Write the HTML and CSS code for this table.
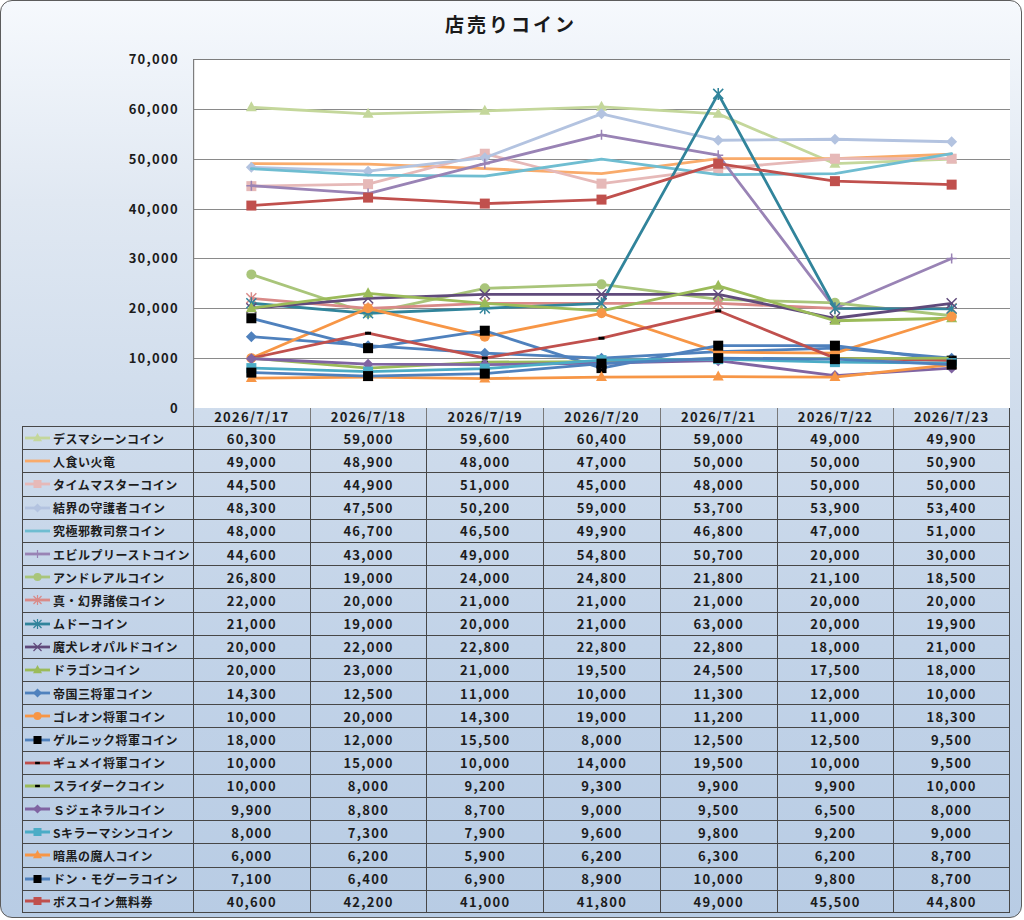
FILE: index.html
```html
<!DOCTYPE html>
<html lang="ja">
<head>
<meta charset="utf-8">
<title>店売りコイン</title>
<link rel="stylesheet" href="styles.css">
</head>
<body>
<div class="frame">
  <h1 class="title">店売りコイン</h1>
  <div class="chart">
    <div class="yaxis">
      <span>70,000</span><span>60,000</span><span>50,000</span><span>40,000</span><span>30,000</span><span>20,000</span><span>10,000</span><span>0</span>
    </div>
    <svg class="plot" id="plot" width="817" height="349" viewBox="0 0 817 349"></svg>
  </div>
  <div class="table">
    <div class="corner"></div>
    <div class="date">2026/7/17</div><div class="date">2026/7/18</div><div class="date">2026/7/19</div><div class="date">2026/7/20</div><div class="date">2026/7/21</div><div class="date">2026/7/22</div><div class="date">2026/7/23</div>

    <div class="name"><svg class="key" data-s="0" width="27" height="12"></svg>デスマシーンコイン</div><div class="num">60,300</div><div class="num">59,000</div><div class="num">59,600</div><div class="num">60,400</div><div class="num">59,000</div><div class="num">49,000</div><div class="num">49,900</div>
    <div class="name"><svg class="key" data-s="1" width="27" height="12"></svg>人食い火竜</div><div class="num">49,000</div><div class="num">48,900</div><div class="num">48,000</div><div class="num">47,000</div><div class="num">50,000</div><div class="num">50,000</div><div class="num">50,900</div>
    <div class="name"><svg class="key" data-s="2" width="27" height="12"></svg>タイムマスターコイン</div><div class="num">44,500</div><div class="num">44,900</div><div class="num">51,000</div><div class="num">45,000</div><div class="num">48,000</div><div class="num">50,000</div><div class="num">50,000</div>
    <div class="name"><svg class="key" data-s="3" width="27" height="12"></svg>結界の守護者コイン</div><div class="num">48,300</div><div class="num">47,500</div><div class="num">50,200</div><div class="num">59,000</div><div class="num">53,700</div><div class="num">53,900</div><div class="num">53,400</div>
    <div class="name"><svg class="key" data-s="4" width="27" height="12"></svg>究極邪教司祭コイン</div><div class="num">48,000</div><div class="num">46,700</div><div class="num">46,500</div><div class="num">49,900</div><div class="num">46,800</div><div class="num">47,000</div><div class="num">51,000</div>
    <div class="name"><svg class="key" data-s="5" width="27" height="12"></svg>エビルプリーストコイン</div><div class="num">44,600</div><div class="num">43,000</div><div class="num">49,000</div><div class="num">54,800</div><div class="num">50,700</div><div class="num">20,000</div><div class="num">30,000</div>
    <div class="name"><svg class="key" data-s="6" width="27" height="12"></svg>アンドレアルコイン</div><div class="num">26,800</div><div class="num">19,000</div><div class="num">24,000</div><div class="num">24,800</div><div class="num">21,800</div><div class="num">21,100</div><div class="num">18,500</div>
    <div class="name"><svg class="key" data-s="7" width="27" height="12"></svg>真・幻界諸侯コイン</div><div class="num">22,000</div><div class="num">20,000</div><div class="num">21,000</div><div class="num">21,000</div><div class="num">21,000</div><div class="num">20,000</div><div class="num">20,000</div>
    <div class="name"><svg class="key" data-s="8" width="27" height="12"></svg>ムドーコイン</div><div class="num">21,000</div><div class="num">19,000</div><div class="num">20,000</div><div class="num">21,000</div><div class="num">63,000</div><div class="num">20,000</div><div class="num">19,900</div>
    <div class="name"><svg class="key" data-s="9" width="27" height="12"></svg>魔犬レオパルドコイン</div><div class="num">20,000</div><div class="num">22,000</div><div class="num">22,800</div><div class="num">22,800</div><div class="num">22,800</div><div class="num">18,000</div><div class="num">21,000</div>
    <div class="name"><svg class="key" data-s="10" width="27" height="12"></svg>ドラゴンコイン</div><div class="num">20,000</div><div class="num">23,000</div><div class="num">21,000</div><div class="num">19,500</div><div class="num">24,500</div><div class="num">17,500</div><div class="num">18,000</div>
    <div class="name"><svg class="key" data-s="11" width="27" height="12"></svg>帝国三将軍コイン</div><div class="num">14,300</div><div class="num">12,500</div><div class="num">11,000</div><div class="num">10,000</div><div class="num">11,300</div><div class="num">12,000</div><div class="num">10,000</div>
    <div class="name"><svg class="key" data-s="12" width="27" height="12"></svg>ゴレオン将軍コイン</div><div class="num">10,000</div><div class="num">20,000</div><div class="num">14,300</div><div class="num">19,000</div><div class="num">11,200</div><div class="num">11,000</div><div class="num">18,300</div>
    <div class="name"><svg class="key" data-s="13" width="27" height="12"></svg>ゲルニック将軍コイン</div><div class="num">18,000</div><div class="num">12,000</div><div class="num">15,500</div><div class="num">8,000</div><div class="num">12,500</div><div class="num">12,500</div><div class="num">9,500</div>
    <div class="name"><svg class="key" data-s="14" width="27" height="12"></svg>ギュメイ将軍コイン</div><div class="num">10,000</div><div class="num">15,000</div><div class="num">10,000</div><div class="num">14,000</div><div class="num">19,500</div><div class="num">10,000</div><div class="num">9,500</div>
    <div class="name"><svg class="key" data-s="15" width="27" height="12"></svg>スライダークコイン</div><div class="num">10,000</div><div class="num">8,000</div><div class="num">9,200</div><div class="num">9,300</div><div class="num">9,900</div><div class="num">9,900</div><div class="num">10,000</div>
    <div class="name"><svg class="key" data-s="16" width="27" height="12"></svg>Ｓジェネラルコイン</div><div class="num">9,900</div><div class="num">8,800</div><div class="num">8,700</div><div class="num">9,000</div><div class="num">9,500</div><div class="num">6,500</div><div class="num">8,000</div>
    <div class="name"><svg class="key" data-s="17" width="27" height="12"></svg>Sキラーマシンコイン</div><div class="num">8,000</div><div class="num">7,300</div><div class="num">7,900</div><div class="num">9,600</div><div class="num">9,800</div><div class="num">9,200</div><div class="num">9,000</div>
    <div class="name"><svg class="key" data-s="18" width="27" height="12"></svg>暗黒の魔人コイン</div><div class="num">6,000</div><div class="num">6,200</div><div class="num">5,900</div><div class="num">6,200</div><div class="num">6,300</div><div class="num">6,200</div><div class="num">8,700</div>
    <div class="name"><svg class="key" data-s="19" width="27" height="12"></svg>ドン・モグーラコイン</div><div class="num">7,100</div><div class="num">6,400</div><div class="num">6,900</div><div class="num">8,900</div><div class="num">10,000</div><div class="num">9,800</div><div class="num">8,700</div>
    <div class="name"><svg class="key" data-s="20" width="27" height="12"></svg>ボスコイン無料券</div><div class="num">40,600</div><div class="num">42,200</div><div class="num">41,000</div><div class="num">41,800</div><div class="num">49,000</div><div class="num">45,500</div><div class="num">44,800</div>
  </div>
</div>
<script src="script.js"></script>
</body>
</html>
```

FILE: styles.css
```css
html, body {
  margin: 0;
  padding: 0;
  background: #ffffff;
}

body {
  font-family: "Noto Sans CJK JP", "Noto Sans", sans-serif;
  color: #1c1c1c;
}

.frame {
  box-sizing: border-box;
  width: 1022px;
  height: 918px;
  border: 1px solid #5c5c5c;
  border-radius: 12px;
  background: linear-gradient(180deg, #f6f9fd 0%, #e0e8f2 22%, #cfdcec 45%, #c2d3e8 70%, #b8cce4 100%);
  display: flex;
  flex-direction: column;
  overflow: hidden;
}

.title {
  margin: 0;
  height: 58px;
  box-sizing: border-box;
  padding-top: 11px;
  font-size: 19px;
  line-height: 24px;
  font-weight: 700;
  letter-spacing: 3px;
  text-align: center;
  color: #1a1a1a;
}

.chart {
  display: flex;
  height: 349px;
}

.yaxis {
  width: 192px;
  height: 365px;
  margin-top: -8px;
  margin-bottom: -8px;
  box-sizing: border-box;
  padding-right: 14px;
  display: flex;
  flex-direction: column;
  justify-content: space-between;
  align-items: flex-end;
  font-size: 13px;
  line-height: 16px;
  font-weight: 700;
  letter-spacing: 1.3px;
}

.plot {
  display: block;
  background: #ffffff;
  flex: none;
}

.table {
  margin-left: 21px;
  width: 988px;
  display: grid;
  grid-template-columns: 171px repeat(7, 1fr);
  grid-template-rows: 18px repeat(21, 23.19px);
}

.table > div {
  box-sizing: border-box;
  border-left: 1px solid #474747;
  border-top: 1px solid #474747;
}

.table > .corner {
  border: none;
}

.table > .date {
  border-top: none;
  border-left-color: #7a7a7a;
  font-size: 13px;
  line-height: 17px;
  font-weight: 700;
  letter-spacing: 1.3px;
  text-align: center;
}

.table > :nth-child(8n) {
  border-right: 1px solid #474747;
}

.table > :nth-last-child(-n+8) {
  border-bottom: 1px solid #474747;
}

.name {
  display: flex;
  align-items: center;
  padding-left: 1px;
  font-size: 12px;
  font-weight: 700;
  letter-spacing: 0.5px;
  white-space: nowrap;
}

.key {
  display: block;
  flex: none;
  margin-right: 2px;
}

.num {
  display: flex;
  align-items: center;
  justify-content: center;
  font-size: 13px;
  font-weight: 700;
  letter-spacing: 1.3px;
}
```

FILE: script.js
```js
(function () {
  var W = 817, H = 349;
  var S = [
    { c: '#C4D79B', m: 'tri', v: [60300, 59000, 59600, 60400, 59000, 49000, 49900] },
    { c: '#F9AB6B', m: 'none', v: [49000, 48900, 48000, 47000, 50000, 50000, 50900] },
    { c: '#E6B9B8', m: 'sq', v: [44500, 44900, 51000, 45000, 48000, 50000, 50000] },
    { c: '#B3C3E0', m: 'dia', v: [48300, 47500, 50200, 59000, 53700, 53900, 53400] },
    { c: '#6FBDD1', m: 'none', v: [48000, 46700, 46500, 49900, 46800, 47000, 51000] },
    { c: '#9983B5', m: 'plus', v: [44600, 43000, 49000, 54800, 50700, 20000, 30000] },
    { c: '#A9C57A', m: 'cir', v: [26800, 19000, 24000, 24800, 21800, 21100, 18500] },
    { c: '#D98A88', m: 'star', v: [22000, 20000, 21000, 21000, 21000, 20000, 20000] },
    { c: '#31849B', m: 'star', v: [21000, 19000, 20000, 21000, 63000, 20000, 19900] },
    { c: '#604A7B', m: 'x', v: [20000, 22000, 22800, 22800, 22800, 18000, 21000] },
    { c: '#9BBB59', m: 'tri', v: [20000, 23000, 21000, 19500, 24500, 17500, 18000] },
    { c: '#4F81BD', m: 'dia', v: [14300, 12500, 11000, 10000, 11300, 12000, 10000] },
    { c: '#F79646', m: 'cir', v: [10000, 20000, 14300, 19000, 11200, 11000, 18300] },
    { c: '#4F81BD', m: 'bsq', v: [18000, 12000, 15500, 8000, 12500, 12500, 9500] },
    { c: '#C0504D', m: 'dash', v: [10000, 15000, 10000, 14000, 19500, 10000, 9500] },
    { c: '#9BBB59', m: 'dash', v: [10000, 8000, 9200, 9300, 9900, 9900, 10000] },
    { c: '#8064A2', m: 'dia', v: [9900, 8800, 8700, 9000, 9500, 6500, 8000] },
    { c: '#4BACC6', m: 'sq', v: [8000, 7300, 7900, 9600, 9800, 9200, 9000] },
    { c: '#F79646', m: 'tri', v: [6000, 6200, 5900, 6200, 6300, 6200, 8700] },
    { c: '#4F81BD', m: 'bsq', v: [7100, 6400, 6900, 8900, 10000, 9800, 8700] },
    { c: '#C0504D', m: 'sq', v: [40600, 42200, 41000, 41800, 49000, 45500, 44800] }
  ];

  function xs(i) { return 58.36 + i * (W / 7); }
  function ys(v) { return H - v * H / 70000; }
  function f(n) { return n.toFixed(2); }

  function marker(type, x, y, s, col, sw) {
    var h = s / 2;
    switch (type) {
      case 'tri':
        return '<polygon points="' + f(x) + ',' + f(y - h - 1) + ' ' + f(x - h - 0.5) + ',' + f(y + h * 0.8) + ' ' + f(x + h + 0.5) + ',' + f(y + h * 0.8) + '" fill="' + col + '"/>';
      case 'sq':
        return '<rect x="' + f(x - h) + '" y="' + f(y - h) + '" width="' + s + '" height="' + s + '" fill="' + col + '"/>';
      case 'bsq':
        return '<rect x="' + f(x - h) + '" y="' + f(y - h) + '" width="' + s + '" height="' + s + '" fill="#000"/>';
      case 'dia':
        return '<polygon points="' + f(x) + ',' + f(y - h - 0.5) + ' ' + f(x + h + 0.5) + ',' + f(y) + ' ' + f(x) + ',' + f(y + h + 0.5) + ' ' + f(x - h - 0.5) + ',' + f(y) + '" fill="' + col + '"/>';
      case 'cir':
        return '<circle cx="' + f(x) + '" cy="' + f(y) + '" r="' + f(h) + '" fill="' + col + '"/>';
      case 'plus':
        return '<path d="M' + f(x - h) + ' ' + f(y) + 'H' + f(x + h) + 'M' + f(x) + ' ' + f(y - h) + 'V' + f(y + h) + '" stroke="' + col + '" stroke-width="' + sw + '" fill="none"/>';
      case 'x':
        return '<path d="M' + f(x - h) + ' ' + f(y - h) + 'L' + f(x + h) + ' ' + f(y + h) + 'M' + f(x + h) + ' ' + f(y - h) + 'L' + f(x - h) + ' ' + f(y + h) + '" stroke="' + col + '" stroke-width="' + sw + '" fill="none"/>';
      case 'star':
        return '<path d="M' + f(x - h) + ' ' + f(y - h) + 'L' + f(x + h) + ' ' + f(y + h) + 'M' + f(x + h) + ' ' + f(y - h) + 'L' + f(x - h) + ' ' + f(y + h) + 'M' + f(x) + ' ' + f(y - h - 1) + 'V' + f(y + h + 1) + '" stroke="' + col + '" stroke-width="' + sw + '" fill="none"/>';
      case 'dash':
        return '<rect x="' + f(x - s * 0.3) + '" y="' + f(y - s * 0.15) + '" width="' + f(s * 0.6) + '" height="' + f(s * 0.3) + '" fill="#000"/>';
      default:
        return '';
    }
  }

  var out = '';
  for (var k = 1; k <= 6; k++) {
    var gy = Math.round(k * H / 7) + 0.5;
    out += '<line x1="0" y1="' + gy + '" x2="' + W + '" y2="' + gy + '" stroke="#8a8a8a" stroke-width="1.2"/>';
  }
  out += '<line x1="0" y1="0.5" x2="' + W + '" y2="0.5" stroke="#7d7d7d" stroke-width="1.2"/>';
  out += '<line x1="0.6" y1="0" x2="0.6" y2="' + H + '" stroke="#7d7d7d" stroke-width="1.2"/>';

  S.forEach(function (s) {
    var pts = s.v.map(function (v, i) { return f(xs(i)) + ',' + f(ys(v)); }).join(' ');
    out += '<polyline points="' + pts + '" fill="none" stroke="' + s.c + '" stroke-width="2.8" stroke-linejoin="round" stroke-linecap="round"/>';
    s.v.forEach(function (v, i) {
      out += marker(s.m, xs(i), ys(v), 10, s.c, 1.5);
    });
  });

  document.getElementById('plot').innerHTML = out;

  var keys = document.querySelectorAll('.key');
  for (var i = 0; i < keys.length; i++) {
    var s = S[+keys[i].getAttribute('data-s')];
    keys[i].innerHTML = '<line x1="1" y1="6" x2="26" y2="6" stroke="' + s.c + '" stroke-width="2.8"/>' + marker(s.m, 13.5, 6, 8, s.c, 1.2);
  }
})();
```
